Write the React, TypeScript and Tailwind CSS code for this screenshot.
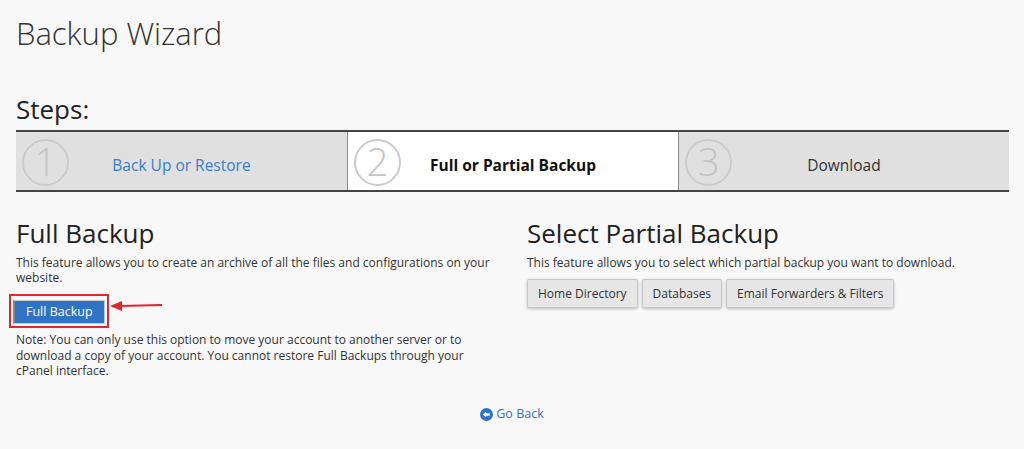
import { useState } from "react";

const steps = [
  { num: "1", label: "Back Up or Restore", state: "done" },
  { num: "2", label: "Full or Partial Backup", state: "current" },
  { num: "3", label: "Download", state: "todo" },
];

function StepCircle({ num }: { num: string }) {
  return (
    <div className="absolute left-[6px] top-[7px] w-[47px] h-[47px] rounded-full border-[2px] border-[#cbcbcb] flex items-center justify-center text-[38px] font-light text-[#c4c4c4] leading-none">
      <span className="-mt-[3px]">{num}</span>
    </div>
  );
}

function App() {
  const [active] = useState(1);

  return (
    <div
      className="w-full min-h-[449px] bg-[#f8f8f8] text-[#333] px-4"
      style={{ fontFamily: '"Open Sans", "Liberation Sans", sans-serif' }}
    >
      <h1 className="pt-[13px] text-[31px] leading-[40px] font-light text-[#333]">
        Backup Wizard
      </h1>

      <h2 className="mt-[39px] text-[26px] leading-[34px] font-medium text-[#222]">
        Steps:
      </h2>

      {/* steps bar */}
      <div className="mt-[4px] grid grid-cols-3 border-y-[2px] border-[#444] h-[62px] w-[993px]">
        {steps.map((s, i) => (
          <div
            key={s.num}
            className={
              "relative flex items-center justify-center pt-[10px] " +
              (i === active ? "bg-white" : "bg-[#e0e0e0]") +
              (i > 0 ? " border-l border-[#8a8a8a]" : "")
            }
          >
            <StepCircle num={s.num} />
            <span
              className={
                "text-[15.5px] " +
                (s.state === "done"
                  ? "text-[#3a7fc8]"
                  : s.state === "current"
                  ? "font-bold text-[#111]"
                  : "text-[#333]")
              }
            >
              {s.label}
            </span>
          </div>
        ))}
      </div>

      <div className="mt-[24px] grid grid-cols-[481px_482px] gap-[30px] w-[993px]">
        {/* full backup */}
        <div>
          <h3 className="text-[26px] leading-[34px] text-[#222]">Full Backup</h3>
          <p className="mt-[5px] text-[12px] leading-[15px] text-[#333]">
            This feature allows you to create an archive of all the files and
            configurations on your website.
          </p>
          <div className="relative mt-[9px] w-fit">
            <div className="-ml-[7px] border-[2px] border-[#e3262c] p-[2px] w-fit">
              <button className="h-[24px] px-[11px] bg-[#2f73c6] text-white text-[12.5px] border border-[#c7c7c7] border-l-[2px] border-l-[#8a8a8a]">
                Full Backup
              </button>
            </div>
            <svg
              className="absolute left-[93px] top-[5px]"
              width="60"
              height="14"
              viewBox="0 0 60 14"
            >
              <line x1="10" y1="7" x2="53" y2="6" stroke="#e3262c" strokeWidth="2" />
              <polygon points="1,7 13,2 13,12" fill="#e3262c" />
            </svg>
          </div>
          <p className="mt-[4px] text-[12px] leading-[15.5px] text-[#333] pr-[10px]">
            Note: You can only use this option to move your account to another
            server or to download a copy of your account. You cannot restore
            Full Backups through your cPanel interface.
          </p>
        </div>

        {/* partial backup */}
        <div>
          <h3 className="text-[26px] leading-[34px] text-[#222]">
            Select Partial Backup
          </h3>
          <p className="mt-[5px] text-[12px] leading-[15px] text-[#333]">
            This feature allows you to select which partial backup you want to
            download.
          </p>
          <div className="mt-[9px] flex gap-[4px]">
            {["Home Directory", "Databases", "Email Forwarders & Filters"].map((b) => (
              <button
                key={b}
                className="h-[29px] px-[10px] bg-[#e6e6e6] border border-[#c9c9c9] rounded-[2px] text-[12px] text-[#333] shadow-[0_1px_3px_rgba(0,0,0,0.25)]"
              >
                {b}
              </button>
            ))}
          </div>
        </div>
      </div>

      {/* go back */}
      <div className="mt-[26px] flex justify-center">
        <a className="flex items-center gap-[3px] text-[12.5px] text-[#2f73c6]" href="#">
          <svg width="13" height="13" viewBox="0 0 16 16">
            <circle cx="8" cy="8" r="8" fill="#2f73c6" />
            <path d="M3.5 8 L7.5 4.5 L7.5 6.5 L12 6.5 L12 9.5 L7.5 9.5 L7.5 11.5 Z" fill="#fff" />
          </svg>
          Go Back
        </a>
      </div>
    </div>
  );
}

export default App;
